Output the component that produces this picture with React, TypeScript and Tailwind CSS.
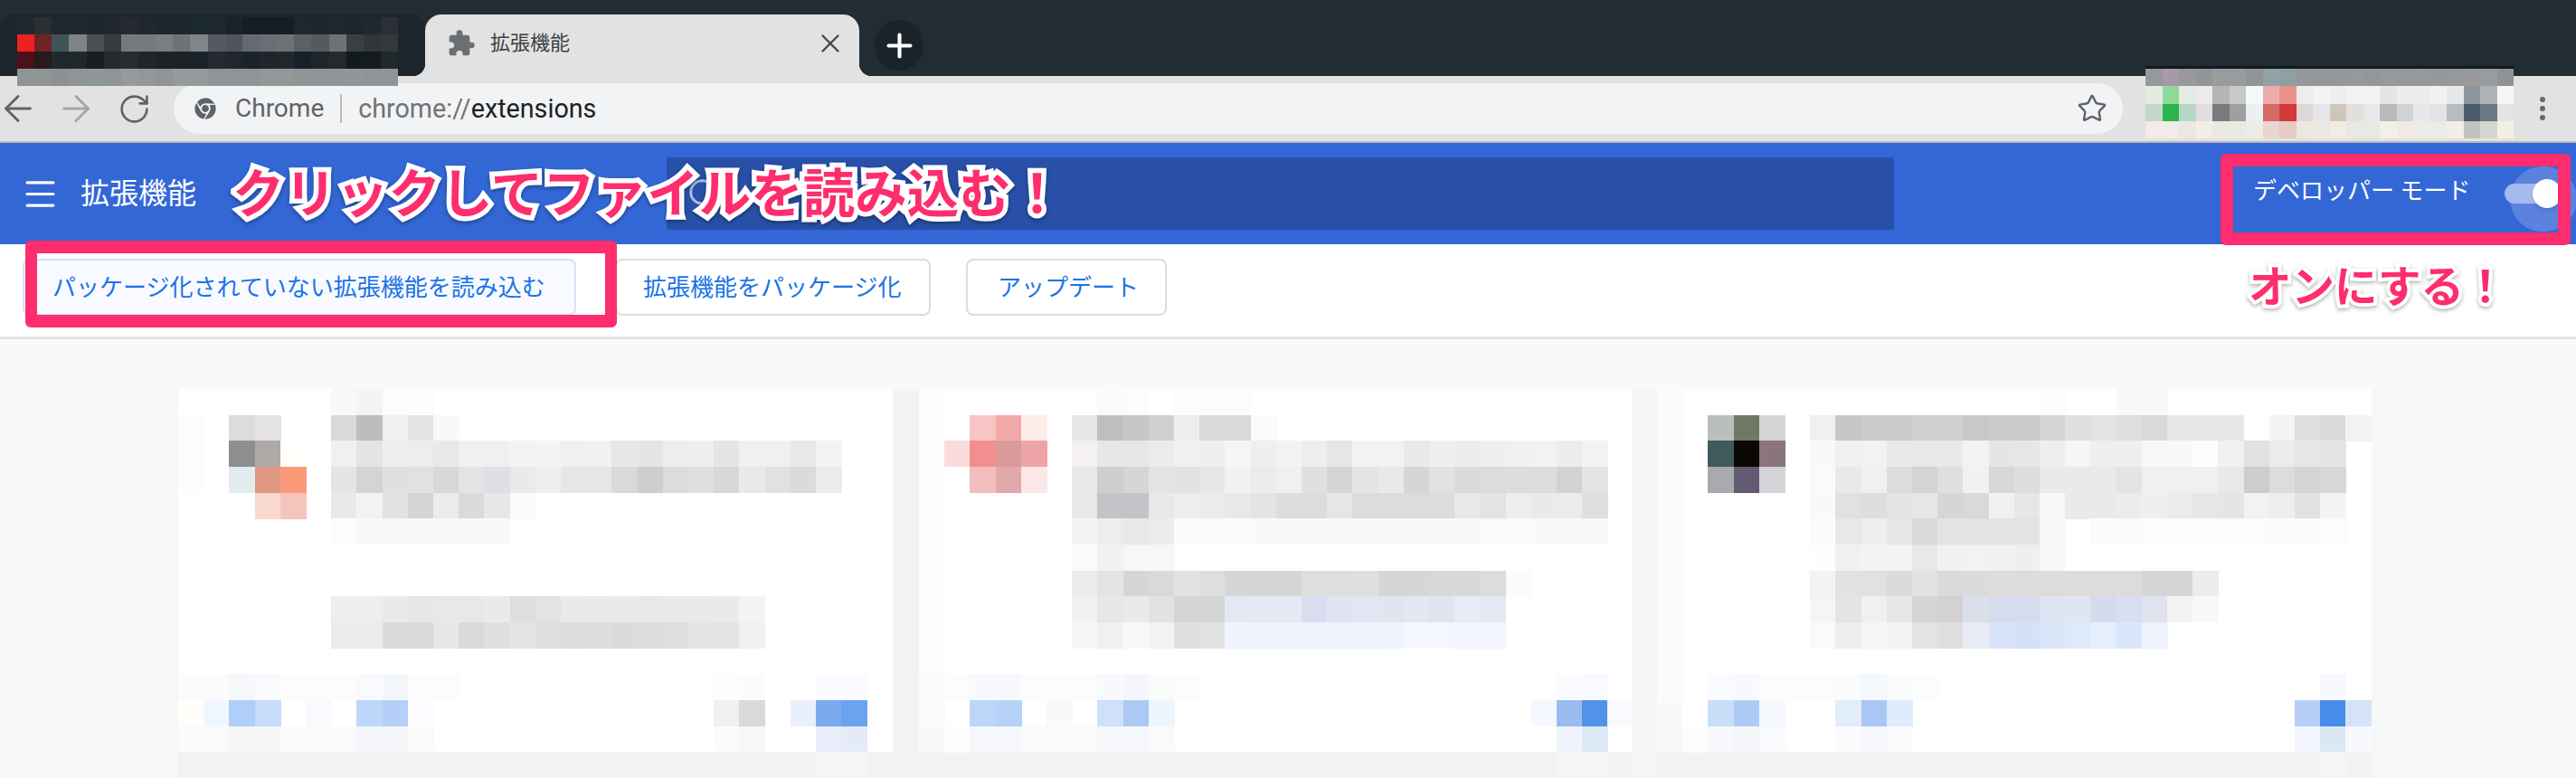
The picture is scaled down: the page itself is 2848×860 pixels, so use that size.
import { ArrowLeft, ArrowRight, Menu, Plus, RotateCw, Search, Star, X } from "lucide-react";
import { FaChrome } from "react-icons/fa";
import { MdExtension } from "react-icons/md";

// blurred areas of the screenshot, "col:hex hex hex" per row, a col prefix jumps ahead
const CELL_W = 28.2;
const CELL_H = 28.67;

const CARD_ONE = [
    "6:f9f9f9 f4f4f4 fcfcfc fcfcfc",
    "0:fcfcfc 2:dcdcdc e3e3e3 6:d8dad9 bdbdbd f0f0f0 e3e4e6 f9f9f9",
    "0:fcfcfc 2:8c8e8f aea9a6 fffffb 6:f0f0f0 e3e4e6 eceeed eceeed e9e9e9 f0f0f0 f0f0f0 f2f4f3 f3f5f4 f0f0f0 f0f1f1 e6e8e7 e4e6e5 ededed efefef e5e5e5 f0f0f0 f0f0f0 e7e8ea f3f3f3",
    "0:fdfdfd 2:e3ecee dd9782 fb9a78 6:e4e5e7 d4d4d4 dfe0e2 e0e1e3 d7d8da e3e4e6 dfe0e3 e9ebea eeeeee e5e6e8 e5e6e8 d8d9db cdced0 dcdcde dfe0e2 d7d8da e8eae9 dfe1e2 dadbdd ebebeb",
    "3:f9d9d0 f4c6bb 6:e8eae9 f2f2f2 e2e2e2 d3d4d6 ebeded dadadc e7e7e7 fbfbfb",
    "6:fbfdfc f9f9f9 f9f9f9 f9f9f9 f9f9f9 f9f9f9 f9f9f9",
    "",
    "",
    "6:eeeeee eeeeee eaeaea e6e6e6 e7e8ea e8e8e8 e9ebea dedfe1 e2e3e5 e9ebea e8eae9 e9ebea e7e8ea e9e9e9 e7e9ea e9ebea f4f4f4",
    "6:ebebeb ebedec dadadc dadadc e6e8e7 d9dadc dfe0e2 e3e4e6 dedee0 dbdcde dcdddf dadbdd dcdddf dddee0 e4e4e4 e4e4e4 f0f0f0",
    "",
    "0:fbfbfb fbfbfb f6f7fb f9fafe fcfcfc fcfcfc fcfcfc f9fafe f4f7fa fcfcfc fcfcfc 21:fdfdfd fbfbfb 25:fafbff fafbff",
    "0:fffefa f0f6ff afcef8 c7dcfb 5:f8fafd 7:bdd6fa b4d0f9 fafcff 21:eff1f0 d7d9da 24:e9f0fc 7aabee 6aa3ee",
    "0:fafafa fafafa f4f6f8 f4f6f8 fbfbfb fbfbfb fbfbfb f5f6fa f5f6fa fbfbfb 21:fbfbfb f7f7f7 25:e8edf9 e4eaf6",
    "25:f6f5f3 f6f5f3",
];

const CARD_TWO = [
    "0:fcfcfc 7:fbfbfb fcfcfc 10:fcfcfc fcfcfc fcfcfc",
    "0:fcfcfc 2:f9c5c4 f4a9a9 fdecea 6:e6e6e6 bebebe c7c7c7 cfcfcf eeeeee d8d9db d8d9db fafafa",
    "0:fcfcfc fbdcdd f48d8d d99a9a eea4a6 6:f5f1f2 e6e8e7 e6e8e7 ececec f0f2f1 eef0ef f6f6f6 efefef f3f3f3 eeeeee e5e6e8 f1f2f2 f1f2f2 e9e9e9 efefef ebedec eef0ef f0f1f1 f2f2f2 ebedec f1f4f2",
    "0:fcfcfc 2:f2bdbd e2a9aa fbe7e7 6:e8e8e8 cdced0 d5d6d8 e2e3e5 e1e2e4 e6e7e9 f1f1f1 ebebeb f0f0f0 dfe0e2 d4d5d5 e3e4e6 e8e9eb d5d6d8 e1e2e4 d9dadc dcdcde dcdcde dcdcde d1d2d4 e3e4e6",
    "0:fcfcfc 6:e8eaea c3c4c8 c3c4c8 e9e9e9 ecedef ebecee e8eae9 e4e4e4 dbdcde dbdcde e5e7e6 dbdcde dbdcde dbdcde dbdcde e8e8e8 e2e3e5 eeeeee e9ebea eaebed dfe0e2",
    "0:fcfcfc 6:f4f4f4 eceeed e7e9e8 ebedec fafafa fafafa fafafa f9f9f9 f9f9f9 f9f9f9 f9f9f9 f9f9f9 f9f9f9 f9f9f9 f9f9f9 f9f9f9 fafafa fafafa f9f9f9 f9f9f9 f9f9f9",
    "0:fcfcfc 6:fafafa f1f1f1 f6f8f7 f6f8f7",
    "0:fcfcfc 6:ececec e3e4e6 d5d6d8 d8d9db e1e2e4 dddee0 d6d6d6 d5d5d5 d5d5d5 dededc dededc dfdfdd d6d6d6 d6d6d6 d8d8d8 d8d8d8 dcdcdc fbfbfb",
    "0:fcfcfc 6:f1f1f1 e6e8e7 eaeaea e2e2e2 d3d4d6 d3d4d6 e3e8f2 e4e9f4 e4e9f4 d8deef e0e5f2 e0e6f2 e0e5ef e4e7f1 dfe4ee e8ecf6 e4e9f4",
    "0:fcfcfc 6:f6f6f6 eff1f0 f8f8f8 f1f3f2 dfe0e2 e1e3e2 eff4fe eef2fc eef2fc eef2fc eef2fc eef2fc f0f4fd f4f7fe f4f7fe f2f5fe f2f5fe",
    "0:fcfcfc",
    "0:fbfbfb fcfcfc f7f9fd f7f9fd fcfcfc fcfcfc fcfcfc f8f9fc f4f6fc fafcfa fcfcfc 25:fafbff f9faff",
    "0:fafafa 2:bcd5f9 b6d2f9 5:f9f9f9 7:cfe0fb acc9f6 eef5fe 24:f5f8ff 99bbf0 5193e8 f9faff",
    "0:f9f9f9 fbfdfc f5f7fa f5f7fa fafafa fafafa fafafa f6f7fb f6f7fb fafafa 25:eff3fb dce8f5",
    "25:f6f5f3 f6f5f3",
];

const CARD_THREE = [
    "0:fbfbfb 15:fcfcfc 18:f9f9f9 f9f9f9",
    "0:fbfbfb 2:b9bfbd 6f7866 d4d4d4 6:f0f0f0 c6c6c6 cbcbcb cacaca d0d0d0 cfcfcf c6c9c7 cbcbcb cacaca d6d6d6 e0e0e0 e3e3e3 dedede d9d9d9 e7e7e7 e7e7e7 e7e7e7 24:f4f4f4 dfdfdf d9dadc f3f3f3",
    "0:fbfbfb 2:3e5a5c 0a0803 8a757b 6:f9f9f9 f0f0f0 f2f2f2 e9e9e9 e8e8e8 e9e9e9 f3f3f3 e4e5e7 e7e7e7 edefee f5f7f6 eef0ef eef0ef f7f7f7 f8f8f8 fdfdfd f1f1f1 e0e1e3 eaecea e5e6e8 e4e5e7",
    "0:fbfbfb 2:a9aaae 635b71 d4d4d8 6:fafafa e8e9eb f0f0f0 dcdcde d3d4d6 dedfe1 f1f1f1 d7d8da dcdddf e9ebea e9ebea eaeaea e4e4e4 eff1f0 eff1f0 f0f0f0 e9e9e9 cccdcf dbdcde d3d4d6 d8d8da",
    "0:fbfbfb 6:f9f9f9 e0e1e3 dcdddf e3e4e6 e7e7e9 d5d6d8 d8d9db f0f2f1 e6e7e9 f8f8f8 e9ebea e9ebea ebedec efefef ebebeb e6e6e8 e5e5e5 f2f2f2 eeeeee e1e2e4 f3f5f4",
    "0:fbfbfb 6:fbfbfb e8e8e8 ecefed e5e6e8 d9dadc e2e3e5 e2e3e5 e2e3e5 e2e3e5 f8f8f8 17:fbfbfb fbfbfb fcfcfc fcfcfc fcfcfc fcfcfc fcfcfc fbfbfb fbfbfb fcfcfc",
    "0:fbfbfb 6:fefefe f1f1f1 f4f4f4 f2f4f3 e7e8ea f0f2f1 f1f3f2 f0f1f3 efefef f9f9f9",
    "0:fbfbfb 6:f3f3f3 e2e2e2 e1e1e1 dadbdd e2e2e2 d9dadc dadbdb dedddb dddcda dddcda dddcda dddcda dddcda d6d6d6 d6d6d6 ebedec",
    "0:fbfbfb 6:f5f5f5 e3e4e6 f0f0f0 e6e6e6 d4d4d4 d2d2d2 dae0ea d5dced d5dced dee5f2 dfe6f3 d5dbee d9dff0 e0e3ee f4f4f2 f8f8f8",
    "0:fbfbfb 6:fafafa eeeeee f5f5f5 f4f4f4 e3e3e3 dfdfdf e8ecf7 d8e2fa d5e1f8 dae6f8 deeaf9 e4eefc dae6fb eef2fc",
    "0:fbfbfb",
    "0:fbfbfb 2:f9fbfe f8f9fe fcfcfc fcfcfc fcfcfc f9fbfc f4f7fb fafbfd fcfcfc 26:f8f9ff",
    "0:f9f9f9 2:c8dff9 aecbf8 f5f8ff 7:e2edfb a9c6f5 e0ebfb 25:b7cff7 478cea d4e3f9",
    "0:f7f7f7 fcfcfc f8f9fd f5f6fa fafbff 7:f9fbfd f5f7fb fbfbfd 25:f4f6fe dce7f4 f8f9fd",
    "26:f6f5f3",
];

const TAB_BLUR = [
    "1e282e 2a2f34 1e282d 20282d 1b252b 1f272d 242a30 20282e 1c262c 1e262c 1c2a2f 20282e 1b2329 161e24 161e24 161e24 1d272d 1c262c 20282e 1e262c 1c2a2f 2a3036",
    "ee2020 6f2327 3f5558 808283 4b4f50 373c40 767a7c 767a7c 7a7e80 6f7378 808585 565a60 51555b 666a70 6b6f75 6e7276 5c6062 555a5c 6d7178 3a3f43 31363a 35393c",
    "4a1218 261a1c 1f2a2e 20282d 161e24 232b31 252d33 1e262c 1c2228 1c2228 1a2329 232b31 1f272c 1a2329 1e262c 20282d 14202a 1c262c 24292e 111a1f 141a20 1e2a2e",
    "8f9596 8f9596 8c9292 8f9596 90979a 8f9596 959a9a 929898 8f9596 959a9a 959a9a 8f9596 8f9596 8f9596 929898 929898 8f9596 8f9596 8f9596 929698 8f9596 8f9596",
];

const ACTION_BLUR = [
    "97989a a899a8 97999b 939596 9a9c9c 999c9d 929596 93a0a4 90a0a2 949899 949798 94979a 96999a 94979a 96989b 96989b 96999b 95989a 96989a 9a9a9c 9a9b9c 8f9292",
    "e1ebe2 90d89a e3ebe4 efe9ec b5b5b3 c8c8c8 f5f9f9 ecacab eb8f89 f1ecec f3f3f3 edeef0 f2f2f2 f3f3f3 e5e5e5 ececec ececec f2f1ef e6e8e8 8d989e aeb5b9 f6f6f6",
    "c3d7ca 2fb350 b8d6c4 e4dde4 7a7c7c 9f9fa0 e9f1f5 d56b69 d23a38 ddd7d8 e4e6e7 cfc6bb e1e0de e9e9eb b9b9b9 d1d2d4 e6e7e9 e2e3e5 b8bcc0 495c68 6a7a82 e5e5e5",
    "f5e9e9 f0ede8 eae8e1 f2eee8 ebe9e2 eaeae5 eeece6 e9d6d1 e8cac6 ebe8e2 ece9e3 f1ece4 e9e8e2 e9e8e2 f3f0ea efeae4 ecebe5 ecebe5 f1efe8 c1c3c0 d5d6cf f2efe7",
];

function parseRow(row: string) {
    let col = 0;
    const out: { col: number; hex: string }[] = [];
    row.split(" ").filter(Boolean).forEach(token => {
        let hex = token;
        if (token.includes(":")) {
            const [c, h] = token.split(":");
            col = Number(c);
            hex = h;
        }
        out.push({ col, hex });
        col += 1;
    });
    return out;
}

function Card({ rows, width }: { rows: string[]; width: number }) {
    return (
        <svg width={width} height={431} shapeRendering="crispEdges" className="block shrink-0 bg-white">
            <rect x={0} y={401} width={width} height={30} fill="#f0f2f3" />
            {rows.map((row, r) =>
                parseRow(row).map(cell => (
                    <rect
                        key={`${r}-${cell.col}`}
                        x={Math.round(cell.col * CELL_W)}
                        y={Math.round(r * CELL_H)}
                        width={29}
                        height={29}
                        fill={`#${cell.hex}`}
                    />
                ))
            )}
        </svg>
    );
}

function Blur({ rows, cell, heights, className }: { rows: string[]; cell: number; heights: number; className: string }) {
    return (
        <svg
            width={rows[0].split(" ").length * cell}
            height={rows.length * heights}
            shapeRendering="crispEdges"
            className={className}
        >
            {rows.map((row, r) =>
                row.split(" ").map((hex, c) => (
                    <rect key={`${r}-${c}`} x={c * cell} y={r * heights} width={cell + 1} height={heights + 1} fill={`#${hex}`} />
                ))
            )}
        </svg>
    );
}

export default function App() {
    return (
        <div className="relative w-[2848px] h-[860px] overflow-hidden flex flex-col bg-[#f8f9fa] font-['Roboto','Noto_Sans_CJK_JP',sans-serif]">
            {/* Tab strip */}
            <div className="h-[84px] shrink-0 bg-[#222d33] flex items-end">
                <div className="w-[470px] h-[68px] rounded-t-[14px] bg-[#1c262c]" />
                <div className="relative w-[480px] h-[68px] rounded-t-[18px] bg-[#e2e2e2] flex items-center pl-[24px] pr-[15px] pb-[4px]">
                    <span className="absolute bottom-0 -left-[14px] w-[14px] h-[14px] bg-[radial-gradient(circle_at_0_0,transparent_14px,#e2e2e2_14.5px)]" />
                    <span className="absolute bottom-0 -right-[14px] w-[14px] h-[14px] bg-[radial-gradient(circle_at_100%_0,transparent_14px,#e2e2e2_14.5px)]" />
                    <MdExtension size={32} className="text-[#6b6e72]" />
                    <span className="ml-[16px] text-[22px] text-[#3c4043] leading-none">拡張機能</span>
                    <X size={34} strokeWidth={1.7} className="ml-auto text-[#45494d]" />
                </div>
                <div className="ml-[17px] mb-[6px] w-[54px] h-[56px] rounded-full bg-[#1a2329] flex items-center justify-center">
                    <Plus size={41} strokeWidth={2.4} className="text-white" />
                </div>
            </div>

            {/* Browser toolbar */}
            <div className="h-[74px] shrink-0 bg-[#e2e2e2] border-b-2 border-[#b8b8b8] flex items-center">
                <ArrowLeft size={46} strokeWidth={1.5} className="-ml-[3px] shrink-0 text-[#5f6368]" />
                <ArrowRight size={46} strokeWidth={1.5} className="ml-[18px] shrink-0 text-[#a2a5a8]" />
                <RotateCw size={37} strokeWidth={1.7} className="ml-[23px] shrink-0 text-[#5f6368]" />
                <div className="ml-[25px] w-[2155px] h-[56px] rounded-full bg-[#f1f3f4] flex items-center pl-[23px] pr-[17px]">
                    <FaChrome size={24} className="text-[#5f6368] shrink-0" />
                    <span className="ml-[21px] text-[28px] text-[#5f6368] leading-none">Chrome</span>
                    <span className="ml-[18px] w-[2px] h-[32px] bg-[#b9bbbe]" />
                    <span className="ml-[18px] text-[28.7px] leading-none text-[#202124]">
                        <span className="text-[#6f7276]">chrome://</span>extensions
                    </span>
                    <Star size={34} strokeWidth={1.7} className="ml-auto text-[#5f6368]" />
                </div>
                <svg width={8} height={28} className="ml-[460px] shrink-0">
                    <circle cx={4} cy={4} r={3} fill="#666a6e" />
                    <circle cx={4} cy={14} r={3} fill="#666a6e" />
                    <circle cx={4} cy={24} r={3} fill="#666a6e" />
                </svg>
            </div>

            {/* Extensions header */}
            <div className="h-[112px] shrink-0 bg-[#3367d6] flex items-center text-white">
                <Menu size={43} strokeWidth={1.8} className="ml-[23px] shrink-0" />
                <span className="ml-[23px] text-[32px] leading-none shrink-0">拡張機能</span>
                <div className="ml-[520px] w-[1357px] h-[80px] rounded-[3px] bg-[#2850a8] flex items-center pl-[22px] shrink-0">
                    <Search size={38} strokeWidth={1.8} className="text-[#aebde6]" />
                </div>
                <span className="ml-[397px] mb-[6px] text-[26px] leading-none whitespace-nowrap shrink-0">デベロッパー モード</span>
                <div className="relative ml-[38px] w-[70px] h-[22px] shrink-0">
                    <span className="absolute left-[6px] -top-[19px] w-[74px] h-[72px] rounded-full bg-[#5c82e0]" />
                    <span className="absolute left-0 top-0 w-[62px] h-[22px] rounded-full bg-[#a5baee]" />
                    <span className="absolute left-[31px] -top-[5px] w-[32px] h-[32px] rounded-full bg-white shadow-md" />
                </div>
            </div>

            {/* Action buttons */}
            <div className="h-[105px] shrink-0 bg-white border-b-[3px] border-[#e4e4e4] flex items-start pt-[16px] pl-[25px] text-[26px] text-[#1a73e8]">
                <button className="h-[63px] w-[612px] rounded-[8px] border-2 border-[#d2e3fc] bg-[#f8faff] text-left pl-[31px] leading-none whitespace-nowrap">
                    パッケージ化されていない拡張機能を読み込む
                </button>
                <button className="ml-[43px] h-[63px] w-[349px] rounded-[8px] border-2 border-[#dadce0] bg-white text-left pl-[29px] leading-none whitespace-nowrap">
                    拡張機能をパッケージ化
                </button>
                <button className="ml-[39px] h-[63px] w-[222px] rounded-[8px] border-2 border-[#dadce0] bg-white text-left pl-[33px] leading-none whitespace-nowrap">
                    アップデート
                </button>
            </div>

            {/* Extension cards, blurred */}
            <div className="flex-1 pt-[55px] pl-[175px] flex items-start">
                <div className="w-[22px] h-[431px] bg-[#f6f8f6] shrink-0" />
                <Card rows={CARD_ONE} width={790} />
                <div className="w-[29px] h-[431px] bg-[#f2f3f5] shrink-0" />
                <Card rows={CARD_TWO} width={788} />
                <div className="w-[28px] h-[431px] bg-[#f4f6f5] shrink-0" />
                <Card rows={CARD_THREE} width={790} />
                <div className="w-[28px] h-[431px] bg-[#f6f8f7] shrink-0" />
            </div>

            {/* Redaction over the window chrome */}
            <Blur rows={TAB_BLUR} cell={19.14} heights={19} className="absolute left-[19px] top-[19px]" />
            <Blur rows={ACTION_BLUR} cell={18.5} heights={19.25} className="absolute left-[2372px] top-[76px]" />
            <div className="absolute left-[2372px] top-[73px] w-[407px] h-[3px] bg-[#12191e]" />

            {/* Annotations */}
            <div className="absolute left-[28px] top-[266px] w-[654px] h-[96px] rounded-[6px] border-x-[13px] border-y-[14px] border-[#fe2d6d]" />
            <div className="absolute left-[2455px] top-[170px] w-[387px] h-[101px] rounded-[6px] border-[14px] border-[#fe2d6d]" />
            <div className="absolute left-[257px] top-[176px] text-[57.5px] leading-[80px] font-bold whitespace-nowrap text-[#fe2d6d] [-webkit-text-stroke:11px_white] [paint-order:stroke_fill] [filter:drop-shadow(0_2px_2px_rgba(0,0,0,0.35))]">
                クリックしてファイルを読み込む！
            </div>
            <div className="absolute left-[2486px] top-[286px] text-[47.5px] leading-[64px] font-bold whitespace-nowrap text-[#fe2d6d] [-webkit-text-stroke:8px_white] [paint-order:stroke_fill] [filter:drop-shadow(0_2px_2px_rgba(0,0,0,0.3))]">
                オンにする！
            </div>
        </div>
    );
}
